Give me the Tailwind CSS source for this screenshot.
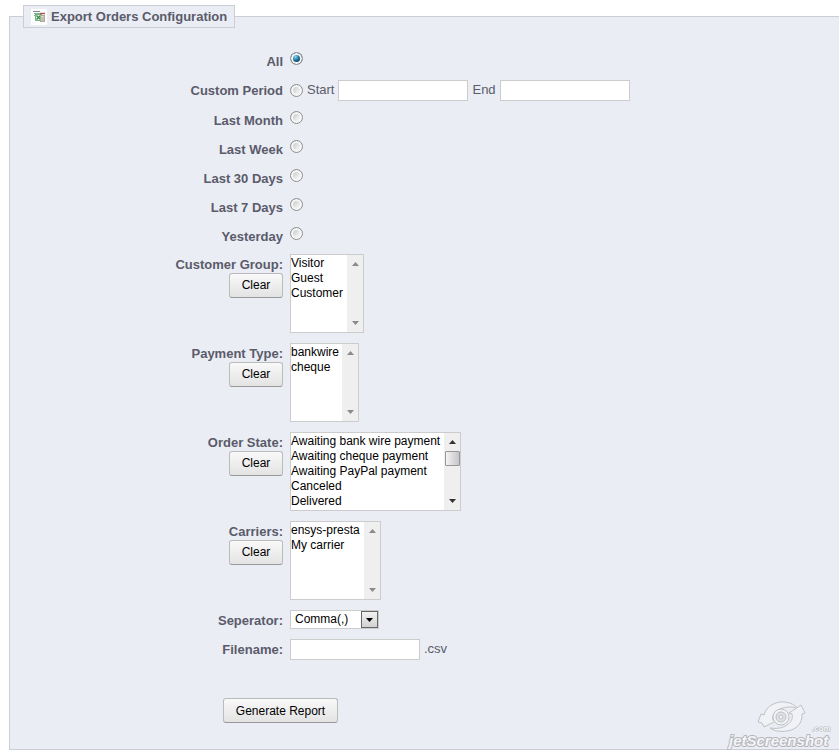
<!DOCTYPE html>
<html lang="en">
<head>
    <meta charset="UTF-8">
    <meta name="viewport" content="width=device-width, initial-scale=1.0">
    <title>Export Orders Configuration</title>
    <script src="https://cdn.jsdelivr.net/npm/@tailwindcss/browser@4"></script>
</head>
<body class="bg-white font-['Liberation_Sans',Arial,sans-serif] text-[13px] leading-5 text-[#5a5b6b]">
    <form class="relative pt-[5px] pl-[9px]">
        <fieldset class="min-w-0 border border-r-0 border-[#ccced7] bg-[#ebedf4] pb-[26px]">
            <legend class="ml-[13px] flex h-[23px] items-center gap-1 border border-[#ccced7] bg-[#ebedf4] px-[7px] font-bold">
                <svg class="h-4 w-4" viewBox="0 0 16 16">
                    <rect width="16" height="16" fill="#fff"/>
                    <path d="M2 2.500h7" stroke="#7d8a9c"/>
                    <path d="M3 4.500h6M3 6.500h3" stroke="#7fae8c"/>
                    <rect x="4.500" y="5.500" width="6" height="6" fill="#e4f3e7" stroke="#74b584"/>
                    <path d="M5.500 6.500l4 4M9.500 6.500l-4 4" stroke="#2f9149" stroke-width="1.300"/>
                    <path d="M9 4.500h5" stroke="#b5524f" stroke-width="1.500"/>
                    <rect x="9.500" y="6.500" width="4" height="6" fill="#d9d6cb" stroke="#b0a79c"/>
                    <path d="M10 9h3M10 11h3" stroke="#8fae86" stroke-width=".8"/>
                </svg>
                Export Orders Configuration
            </legend>

            <div class="pt-[23px]">
                <div class="flex h-[29px] gap-[7px]">
                    <label for="all" class="w-[273px] pt-px text-right font-bold">All</label>
                    <input type="radio" id="all" name="period" checked class="mt-px h-[13px] w-[13px] appearance-none rounded-full border border-[#8e8f8f] bg-[radial-gradient(circle_at_40%_35%,#8fd8f5_0%,#1d739d_35%,#0b2f4d_65%)] shadow-[inset_0_0_0_2px_#f6f6f6]">
                </div>
                <div class="flex h-[30px] gap-[7px]">
                    <label for="custom" class="w-[273px] pt-px text-right font-bold">Custom Period</label>
                    <div class="flex h-[21px] items-center gap-1">
                        <input type="radio" id="custom" name="period" class="h-[13px] w-[13px] appearance-none rounded-full border border-[#8e8f8f] bg-[linear-gradient(135deg,#b9bcbf,#f6f6f6_75%)] shadow-[inset_0_0_0_2px_#f6f6f6]">
                        <label for="start" class="pb-px">Start</label>
                        <input type="text" id="start" class="h-[21px] w-[130px] border border-[#ccc] bg-white px-1 text-xs text-black">
                        <label for="end" class="pb-px">End</label>
                        <input type="text" id="end" class="h-[21px] w-[130px] border border-[#ccc] bg-white px-1 text-xs text-black">
                    </div>
                </div>
                <div class="-mb-px">
                    <div class="flex h-[29px] gap-[7px]">
                        <label for="last-month" class="w-[273px] pt-px text-right font-bold">Last Month</label>
                        <input type="radio" id="last-month" name="period" class="mt-px h-[13px] w-[13px] appearance-none rounded-full border border-[#8e8f8f] bg-[linear-gradient(135deg,#b9bcbf,#f6f6f6_75%)] shadow-[inset_0_0_0_2px_#f6f6f6]">
                    </div>
                    <div class="flex h-[29px] gap-[7px]">
                        <label for="last-week" class="w-[273px] pt-px text-right font-bold">Last Week</label>
                        <input type="radio" id="last-week" name="period" class="mt-px h-[13px] w-[13px] appearance-none rounded-full border border-[#8e8f8f] bg-[linear-gradient(135deg,#b9bcbf,#f6f6f6_75%)] shadow-[inset_0_0_0_2px_#f6f6f6]">
                    </div>
                    <div class="flex h-[29px] gap-[7px]">
                        <label for="last-30" class="w-[273px] pt-px text-right font-bold">Last 30 Days</label>
                        <input type="radio" id="last-30" name="period" class="mt-px h-[13px] w-[13px] appearance-none rounded-full border border-[#8e8f8f] bg-[linear-gradient(135deg,#b9bcbf,#f6f6f6_75%)] shadow-[inset_0_0_0_2px_#f6f6f6]">
                    </div>
                    <div class="flex h-[29px] gap-[7px]">
                        <label for="last-7" class="w-[273px] pt-px text-right font-bold">Last 7 Days</label>
                        <input type="radio" id="last-7" name="period" class="mt-px h-[13px] w-[13px] appearance-none rounded-full border border-[#8e8f8f] bg-[linear-gradient(135deg,#b9bcbf,#f6f6f6_75%)] shadow-[inset_0_0_0_2px_#f6f6f6]">
                    </div>
                    <div class="flex h-[29px] gap-[7px]">
                        <label for="yesterday" class="w-[273px] pt-px text-right font-bold">Yesterday</label>
                        <input type="radio" id="yesterday" name="period" class="mt-px h-[13px] w-[13px] appearance-none rounded-full border border-[#8e8f8f] bg-[linear-gradient(135deg,#b9bcbf,#f6f6f6_75%)] shadow-[inset_0_0_0_2px_#f6f6f6]">
                    </div>
                </div>

                <!-- multi selects -->
                <div class="mb-[10px] flex gap-[7px]">
                    <div class="flex w-[273px] flex-col items-end">
                        <label for="groups" class="h-[19px] pt-px font-bold">Customer Group:</label>
                        <button type="button" data-clear="groups" class="h-[25px] w-[54px] rounded-[3px] border border-[#bbb] border-b-[#999] bg-linear-to-b from-[#f9f9f9] to-[#e3e3e3] pb-px text-xs text-black">Clear</button>
                    </div>
                    <div class="flex h-[79px] w-[74px] border border-[#ccc] bg-white">
                        <select id="groups" multiple size="5" class="min-w-0 flex-1 appearance-none overflow-hidden pt-px text-xs leading-[15px] text-black">
                            <option class="h-[15px] min-h-0 p-0">Visitor</option>
                            <option class="h-[15px] min-h-0 p-0">Guest</option>
                            <option class="h-[15px] min-h-0 p-0">Customer</option>
                        </select>
                        <div class="flex w-4 flex-col items-center justify-between bg-[#efefef] py-[7px]">
                            <svg class="h-1 w-[7px]" viewBox="0 0 7 4"><path d="M0 4L3.500 0L7 4z" fill="#8a8a8a"/></svg>
                            <svg class="h-1 w-[7px]" viewBox="0 0 7 4"><path d="M0 0L3.500 4L7 0z" fill="#8a8a8a"/></svg>
                        </div>
                    </div>
                </div>
                <div class="mb-[10px] flex gap-[7px]">
                    <div class="flex w-[273px] flex-col items-end">
                        <label for="payments" class="h-[19px] pt-px font-bold">Payment Type:</label>
                        <button type="button" data-clear="payments" class="h-[25px] w-[54px] rounded-[3px] border border-[#bbb] border-b-[#999] bg-linear-to-b from-[#f9f9f9] to-[#e3e3e3] pb-px text-xs text-black">Clear</button>
                    </div>
                    <div class="flex h-[79px] w-[69px] border border-[#ccc] bg-white">
                        <select id="payments" multiple size="5" class="min-w-0 flex-1 appearance-none overflow-hidden pt-px text-xs leading-[15px] text-black">
                            <option class="h-[15px] min-h-0 p-0">bankwire</option>
                            <option class="h-[15px] min-h-0 p-0">cheque</option>
                        </select>
                        <div class="flex w-4 flex-col items-center justify-between bg-[#efefef] py-[7px]">
                            <svg class="h-1 w-[7px]" viewBox="0 0 7 4"><path d="M0 4L3.500 0L7 4z" fill="#8a8a8a"/></svg>
                            <svg class="h-1 w-[7px]" viewBox="0 0 7 4"><path d="M0 0L3.500 4L7 0z" fill="#8a8a8a"/></svg>
                        </div>
                    </div>
                </div>
                <div class="mb-[10px] flex gap-[7px]">
                    <div class="flex w-[273px] flex-col items-end">
                        <label for="states" class="h-[19px] pt-px font-bold">Order State:</label>
                        <button type="button" data-clear="states" class="h-[25px] w-[54px] rounded-[3px] border border-[#bbb] border-b-[#999] bg-linear-to-b from-[#f9f9f9] to-[#e3e3e3] pb-px text-xs text-black">Clear</button>
                    </div>
                    <div class="flex h-[79px] w-[171px] border border-[#ccc] bg-white">
                        <select id="states" multiple size="5" class="min-w-0 flex-1 appearance-none overflow-hidden pt-px text-xs leading-[15px] text-black">
                            <option class="h-[15px] min-h-0 p-0">Awaiting bank wire payment</option>
                            <option class="h-[15px] min-h-0 p-0">Awaiting cheque payment</option>
                            <option class="h-[15px] min-h-0 p-0">Awaiting PayPal payment</option>
                            <option class="h-[15px] min-h-0 p-0">Canceled</option>
                            <option class="h-[15px] min-h-0 p-0">Delivered</option>
                        </select>
                        <div class="flex w-4 flex-col items-center bg-[#efefef] py-[7px]">
                            <svg class="h-1 w-[7px]" viewBox="0 0 7 4"><path d="M0 4L3.500 0L7 4z" fill="#333"/></svg>
                            <div class="mt-[7px] h-[15px] w-[15px] rounded-[1px] border border-[#979797] bg-linear-to-r from-[#f3f3f3] to-[#c6c6ca]"></div>
                            <svg class="mt-auto h-1 w-[7px]" viewBox="0 0 7 4"><path d="M0 0L3.500 4L7 0z" fill="#333"/></svg>
                        </div>
                    </div>
                </div>
                <div class="mb-[10px] flex gap-[7px]">
                    <div class="flex w-[273px] flex-col items-end">
                        <label for="carriers" class="h-[19px] pt-px font-bold">Carriers:</label>
                        <button type="button" data-clear="carriers" class="h-[25px] w-[54px] rounded-[3px] border border-[#bbb] border-b-[#999] bg-linear-to-b from-[#f9f9f9] to-[#e3e3e3] pb-px text-xs text-black">Clear</button>
                    </div>
                    <div class="flex h-[79px] w-[91px] border border-[#ccc] bg-white">
                        <select id="carriers" multiple size="5" class="min-w-0 flex-1 appearance-none overflow-hidden pt-px text-xs leading-[15px] text-black">
                            <option class="h-[15px] min-h-0 p-0">ensys-presta</option>
                            <option class="h-[15px] min-h-0 p-0">My carrier</option>
                        </select>
                        <div class="flex w-4 flex-col items-center justify-between bg-[#efefef] py-[7px]">
                            <svg class="h-1 w-[7px]" viewBox="0 0 7 4"><path d="M0 4L3.500 0L7 4z" fill="#8a8a8a"/></svg>
                            <svg class="h-1 w-[7px]" viewBox="0 0 7 4"><path d="M0 0L3.500 4L7 0z" fill="#8a8a8a"/></svg>
                        </div>
                    </div>
                </div>

                <div class="flex h-[29px] gap-[7px]">
                    <label for="separator" class="w-[273px] pt-px text-right font-bold">Seperator:</label>
                    <div class="relative h-[19px] w-[89px]">
                        <select id="separator" class="block h-[19px] w-full appearance-none border border-[#ccc] bg-white pb-px pl-1 text-xs leading-4 text-black">
                            <option>Comma(,)</option>
                            <option>Semicolon(;)</option>
                        </select>
                        <span class="pointer-events-none absolute top-px right-px flex h-[17px] w-[17px] items-center justify-center border border-[#666] bg-linear-to-b from-[#f2f2f2] to-[#d2d2d2]">
                            <svg class="mt-px h-1 w-[7px]" viewBox="0 0 7 4"><path d="M0 0L3.500 4L7 0z" fill="#000"/></svg>
                        </span>
                    </div>
                </div>
                <div class="flex gap-[7px]">
                    <label for="filename" class="w-[273px] pt-px text-right font-bold">Filename:</label>
                    <div class="flex gap-1">
                        <input type="text" id="filename" class="h-[21px] w-[130px] border border-[#ccc] bg-white px-1 text-xs text-black">
                        <span>.csv</span>
                    </div>
                </div>

                <button type="submit" class="mt-[38px] ml-[213px] block h-[25px] w-[115px] rounded-[3px] border border-[#bbb] border-b-[#999] bg-linear-to-b from-[#f9f9f9] to-[#e3e3e3] text-xs text-black">Generate Report</button>
            </div>
        </fieldset>

        <!-- watermark -->
        <svg class="pointer-events-none absolute right-1 bottom-0 h-[50px] w-[108px]" viewBox="0 0 108 50" fill="#f1f2f5" stroke="#c0c1c6" stroke-width="1" stroke-linejoin="round">
            <path d="M31 22L34 14L37 15C39 6 49 1 58 2C64 3 68 5 70 8C63 6 56 7 51 10C46 13 45 17 46 20L49 21L37 27L35 23z"/>
            <path d="M74 5L78 13L75 14C76 23 69 30 60 31C53 32 47 31 43 28C50 29 56 28 60 25C65 22 66 17 65 14L62 13z"/>
            <circle cx="54" cy="17" r="8"/>
            <circle cx="54" cy="17" r="5" fill="#dfe0e5"/>
            <circle cx="54" cy="17" r="2"/>
            <text x="2" y="46" font-family="Liberation Sans" font-size="15" font-weight="bold" font-style="italic" paint-order="stroke" stroke="#b4b5ba" stroke-width="2" fill="#f4f5f8">jetScreenshot</text>
            <text x="85" y="31" font-family="Liberation Sans" font-size="8" font-weight="bold" paint-order="stroke" stroke="#b4b5ba" fill="#f4f5f8">.com</text>
        </svg>
    </form>
    <script>
        document.querySelectorAll('[data-clear]').forEach(button => {
            button.addEventListener('click', () => {
                document.getElementById(button.dataset.clear).selectedIndex = -1;
            });
        });
    </script>
</body>
</html>
